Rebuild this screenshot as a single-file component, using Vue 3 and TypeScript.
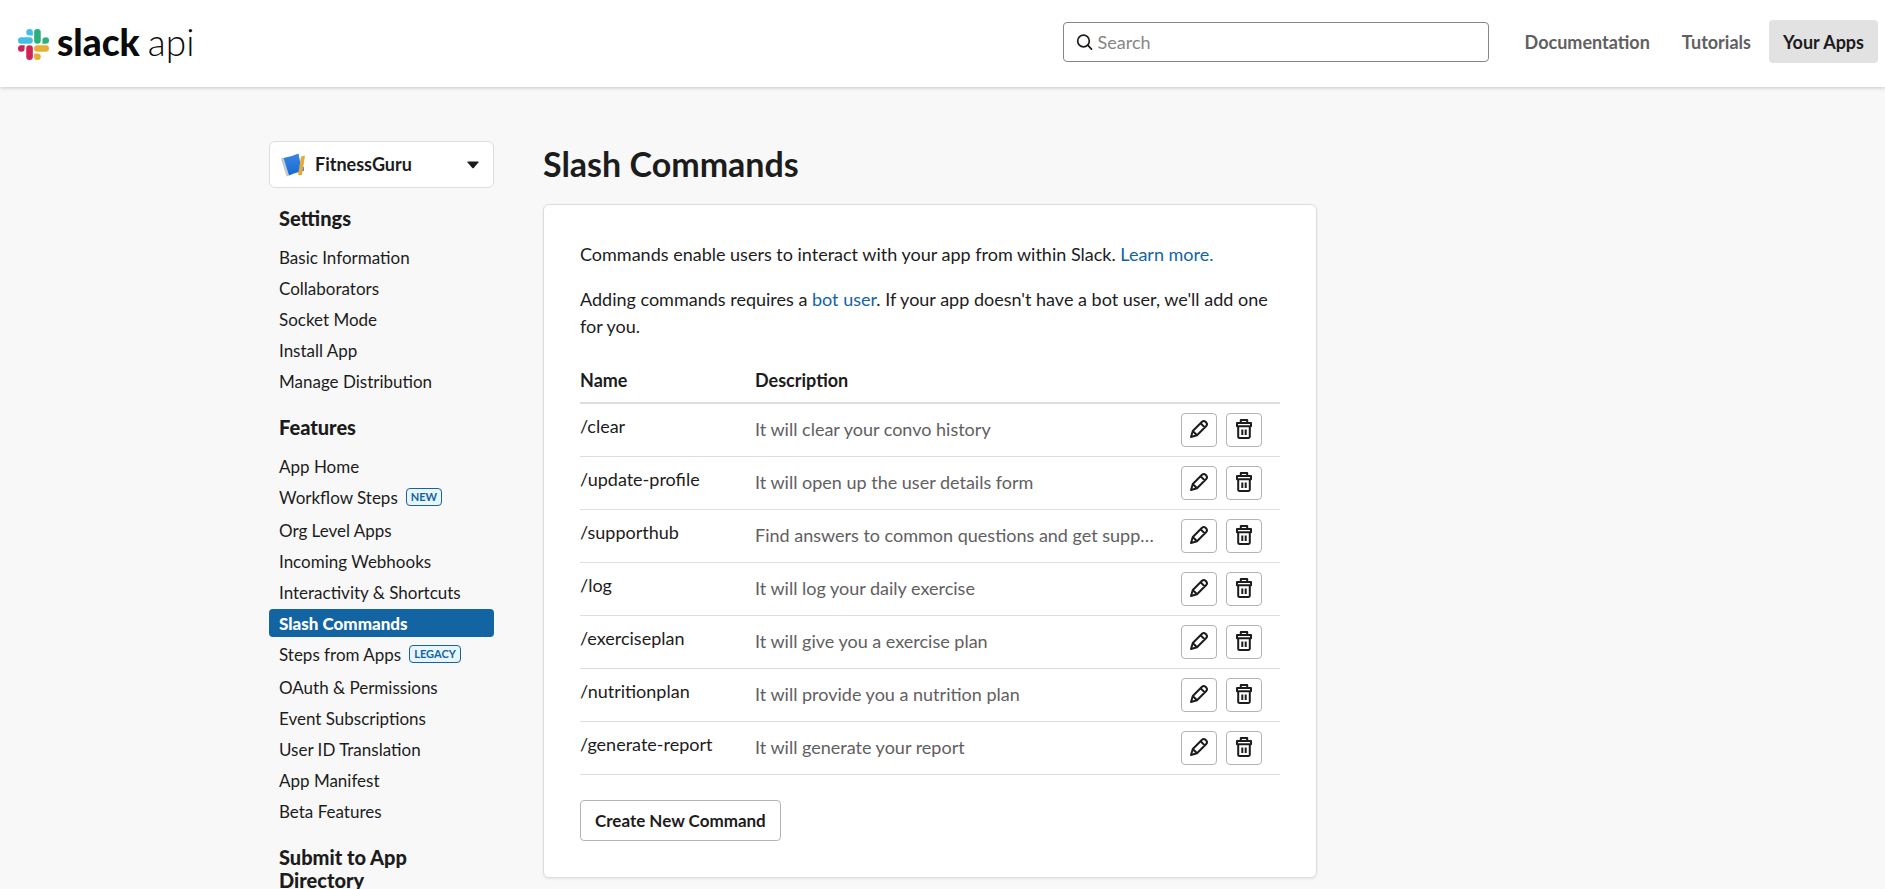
<script setup lang="ts">
interface NavItem {
  label: string
  badge?: string
  active?: boolean
}

interface NavGroup {
  title: string
  items: NavItem[]
}

interface Command {
  name: string
  description: string
}

const groups: NavGroup[] = [
  {
    title: 'Settings',
    items: [
      { label: 'Basic Information' },
      { label: 'Collaborators' },
      { label: 'Socket Mode' },
      { label: 'Install App' },
      { label: 'Manage Distribution' },
    ],
  },
  {
    title: 'Features',
    items: [
      { label: 'App Home' },
      { label: 'Workflow Steps', badge: 'NEW' },
      { label: 'Org Level Apps' },
      { label: 'Incoming Webhooks' },
      { label: 'Interactivity & Shortcuts' },
      { label: 'Slash Commands', active: true },
      { label: 'Steps from Apps', badge: 'LEGACY' },
      { label: 'OAuth & Permissions' },
      { label: 'Event Subscriptions' },
      { label: 'User ID Translation' },
      { label: 'App Manifest' },
      { label: 'Beta Features' },
    ],
  },
  { title: 'Submit to App Directory', items: [] },
]

const commands: Command[] = [
  { name: '/clear', description: 'It will clear your convo history' },
  { name: '/update-profile', description: 'It will open up the user details form' },
  { name: '/supporthub', description: 'Find answers to common questions and get supp…' },
  { name: '/log', description: 'It will log your daily exercise' },
  { name: '/exerciseplan', description: 'It will give you a exercise plan' },
  { name: '/nutritionplan', description: 'It will provide you a nutrition plan' },
  { name: '/generate-report', description: 'It will generate your report' },
]
</script>

<template>
  <div class="page">
    <header class="topbar">
      <a class="brand" href="#" aria-label="slack api">
        <svg class="mark" viewBox="0 0 124 124" aria-hidden="true">
          <path fill="#ce2355" d="M26.4 78.2a13.2 13.2 0 1 1-13.2-13.2h13.2zM33 78.2a13.2 13.2 0 0 1 26.4 0v32.6a13.2 13.2 0 0 1-26.4 0z" />
          <path fill="#42c0e3" d="M46.2 26.4a13.2 13.2 0 1 1 13.2-13.2v13.2zM46.2 33a13.2 13.2 0 0 1 0 26.4h-33a13.2 13.2 0 0 1 0-26.4z" />
          <path fill="#2bb07c" d="M97.6 46.2a13.2 13.2 0 1 1 13.2 13.2h-13.2zM91 46.2a13.2 13.2 0 0 1-26.4 0v-33a13.2 13.2 0 0 1 26.4 0z" />
          <path fill="#e6ae36" d="M77.8 97.6a13.2 13.2 0 1 1-13.2 13.2v-13.2zM77.8 91a13.2 13.2 0 0 1 0-26.4h33a13.2 13.2 0 0 1 0 26.4z" />
        </svg>
        <span class="word">slack</span>
        <span class="api">api</span>
      </a>
      <label class="search">
        <svg viewBox="0 0 18 18" aria-hidden="true">
          <circle cx="7.500" cy="8" r="5.800" />
          <path d="M11.700 12.200 15.500 16.200" />
        </svg>
        <input type="search" placeholder="Search" aria-label="Search" />
      </label>
      <nav class="links">
        <a href="#">Documentation</a>
        <a href="#">Tutorials</a>
        <a href="#" class="current">Your Apps</a>
      </nav>
    </header>

    <div class="body">
      <aside class="sidebar">
        <button class="app-picker" type="button">
          <svg class="app-icon" viewBox="0 0 24 24" aria-hidden="true">
            <defs>
              <linearGradient id="cover" x1="0" y1="0" x2="0" y2="1">
                <stop offset="0" stop-color="#3a86e4" />
                <stop offset="1" stop-color="#1769d2" />
              </linearGradient>
            </defs>
            <path d="M0 5.500 2.500 4.500 8 22.500 5.500 23.500z" fill="#c8c8c8" />
            <path d="M20 14h3v4h-3z" fill="#4a86c8" />
            <path d="M2.500 5Q11 3.500 17.500 0.500L21 18.500Q14 19.500 8 22.500z" fill="url(#cover)" />
            <path d="M20 3.500 24 2.500 21 22 17 22z" fill="#e5a93b" />
          </svg>
          <span class="app-name">FitnessGuru</span>
          <svg class="caret" viewBox="0 0 12 8" aria-hidden="true">
            <path d="M1 0.500h10q1 0 0.400 0.900L6.700 7q-0.700 0.700-1.400 0L0.600 1.400Q0 0.500 1 0.500z" />
          </svg>
        </button>

        <nav v-for="group in groups" :key="group.title" class="group">
          <h2>{{ group.title }}</h2>
          <ul v-if="group.items.length">
            <li v-for="item in group.items" :key="item.label" :class="{ tagged: item.badge }">
              <a href="#" :class="{ active: item.active }">
                {{ item.label }}
                <span v-if="item.badge" class="badge">{{ item.badge }}</span>
              </a>
            </li>
          </ul>
        </nav>
      </aside>

      <main class="content">
        <h1>Slash Commands</h1>
        <section class="card">
          <p>
            Commands enable users to interact with your app from within Slack.
            <a href="#">Learn more.</a>
          </p>
          <p>
            Adding commands requires a <a href="#">bot user</a>. If your app doesn't have a bot
            user, we'll add one for you.
          </p>
          <table>
            <thead>
              <tr>
                <th class="col-name" scope="col">Name</th>
                <th scope="col">Description</th>
                <td class="col-actions"></td>
              </tr>
            </thead>
            <tbody>
              <tr v-for="command in commands" :key="command.name">
                <td class="name">{{ command.name }}</td>
                <td class="description">{{ command.description }}</td>
                <td>
                  <div class="actions">
                    <button type="button" :aria-label="`Edit ${command.name}`">
                      <svg viewBox="0 0 20 20" aria-hidden="true">
                        <path d="M2 18 3.800 12 13 2.800q1.800-1.600 3.500 0l0.700 0.700q1.600 1.700 0 3.500L8 16.200zM11.600 4.300l4.100 4.100M3.800 12l4.200 4.200" />
                      </svg>
                    </button>
                    <button type="button" :aria-label="`Delete ${command.name}`">
                      <svg viewBox="0 0 20 20" aria-hidden="true">
                        <path d="M3 4h14v3.200H3zM6.800 4V1h6.400v3M4.200 7.200h11.600v10.300a1.500 1.500 0 0 1-1.500 1.500H5.700a1.500 1.500 0 0 1-1.500-1.500zM8.300 10.500v5.500M11.700 10.500v5.500" />
                      </svg>
                    </button>
                  </div>
                </td>
              </tr>
            </tbody>
          </table>
          <button class="create" type="button">Create New Command</button>
        </section>
      </main>
    </div>
  </div>
</template>

<style>
html,
body {
  background: #f8f8f8;
}

body {
  overflow: hidden;
}
</style>

<style scoped>
.page {
  height: 100vh;
  overflow: hidden;
  color: #1d1c1d;
  background: #f8f8f8;
  font: 400 18px/27px Lato, 'Liberation Sans', sans-serif;
}

.page *,
.page *::before {
  box-sizing: border-box;
}

a {
  color: #1264a3;
  text-decoration: none;
}

button {
  padding: 0;
  color: inherit;
  font: inherit;
  background: #fff;
  border: 1px solid #b4b4b4;
  border-radius: 4px;
}

.topbar {
  display: flex;
  align-items: flex-start;
  height: 87px;
  padding: 20px 7px 0 18px;
  background: #fff;
  box-shadow: 0 1px 4px rgba(0, 0, 0, 0.2);
}

.brand {
  display: flex;
  align-items: flex-start;
  height: 48px;
  margin-right: auto;
  color: #0b0b0b;
  line-height: 44px;
}

.mark {
  align-self: center;
  width: 31px;
  height: 31px;
  margin-right: 8px;
}

.word {
  font-size: 37px;
  font-weight: 900;
}

.api {
  margin-left: 8px;
  font-size: 37px;
  font-weight: 300;
}

.search {
  display: flex;
  align-items: center;
  width: 426px;
  height: 40px;
  margin-top: 2px;
  padding: 0 12px;
  border: 1px solid #868686;
  border-radius: 4px;
}

.search svg {
  width: 18px;
  height: 18px;
  margin-right: 4px;
  fill: none;
  stroke: #1d1c1d;
  stroke-width: 1.7;
  stroke-linecap: round;
}

.search input {
  flex: 1;
  min-width: 0;
  padding: 0;
  font: inherit;
  background: none;
  border: 0;
  outline: 0;
}

.search input::placeholder {
  color: #868686;
  opacity: 1;
}

.links {
  display: flex;
  gap: 4px;
  margin-left: 22px;
}

.links a {
  padding: 9px 14px 7px;
  color: #616061;
  font-weight: 700;
  border-radius: 4px;
}

.links .current {
  color: #1d1c1d;
  background: #e2e2e2;
}

.body {
  display: flex;
  gap: 49px;
  width: 1048px;
  margin-left: 269px;
  padding-top: 54px;
}

.sidebar {
  flex: 0 0 225px;
}

.app-picker {
  display: flex;
  align-items: center;
  width: 100%;
  height: 47px;
  margin-bottom: 19px;
  padding: 0 14px 0 11px;
  border-color: #dddddd;
  border-radius: 6px;
}

.app-icon {
  width: 24px;
  height: 24px;
  margin-right: 10px;
}

.app-name {
  flex: 1;
  text-align: left;
  font-weight: 700;
}

.caret {
  width: 12px;
  height: 8px;
  fill: #1d1c1d;
}

.group {
  margin-bottom: 21px;
}

.group h2 {
  margin: 0;
  padding: 0 10px;
  font-size: 20px;
  font-weight: 900;
  line-height: 23px;
}

.group ul {
  display: flex;
  flex-direction: column;
  gap: 3px;
  margin: 0;
  padding: 13px 0 0;
  list-style: none;
}

.group .tagged {
  padding-bottom: 2px;
}

.group li a {
  display: flex;
  align-items: center;
  height: 28px;
  padding: 0 10px;
  color: #1d1c1d;
  font-size: 17px;
  border-radius: 4px;
}

.group li .active {
  color: #fff;
  font-weight: 900;
  background: #1264a3;
}

.badge {
  margin-left: 8px;
  padding: 0 4px;
  color: #1264a3;
  font-size: 11px;
  font-weight: 700;
  line-height: 16px;
  background: #e8f5fa;
  border: 1px solid #1264a3;
  border-radius: 4px;
}

.content {
  flex: 1;
  min-width: 0;
}

h1 {
  margin: 0 0 17px;
  font-size: 34px;
  font-weight: 700;
  line-height: 46px;
}

.card {
  padding: 36px;
  background: #fff;
  border: 1px solid #dddddd;
  border-radius: 6px;
  box-shadow: 0 1px 3px rgba(0, 0, 0, 0.08);
}

p {
  margin: 0 0 18px;
}

table {
  width: 100%;
  border-collapse: separate;
  border-spacing: 0;
  table-layout: fixed;
}

th,
td {
  padding: 0;
  text-align: left;
  border-bottom: 1px solid #dddddd;
}

th {
  height: 46px;
  font-weight: 700;
}

thead th,
thead td {
  border-bottom-width: 2px;
}

.col-name {
  width: 175px;
}

.col-actions {
  width: 99px;
}

.name {
  padding-bottom: 7px;
}

.description {
  padding-right: 18px;
  padding-bottom: 1px;
  color: #616061;
  white-space: nowrap;
}

.actions {
  display: flex;
  gap: 9px;
  padding: 9px 0;
}

.actions button {
  display: grid;
  place-items: center;
  width: 36px;
  height: 34px;
  padding-bottom: 2px;
}

.actions svg {
  width: 20px;
  height: 20px;
  fill: none;
  stroke: #1d1c1d;
  stroke-width: 2;
  stroke-linejoin: round;
}

.create {
  height: 41px;
  margin-top: 25px;
  padding: 0 14px;
  font-size: 17px;
  font-weight: 700;
}
</style>
